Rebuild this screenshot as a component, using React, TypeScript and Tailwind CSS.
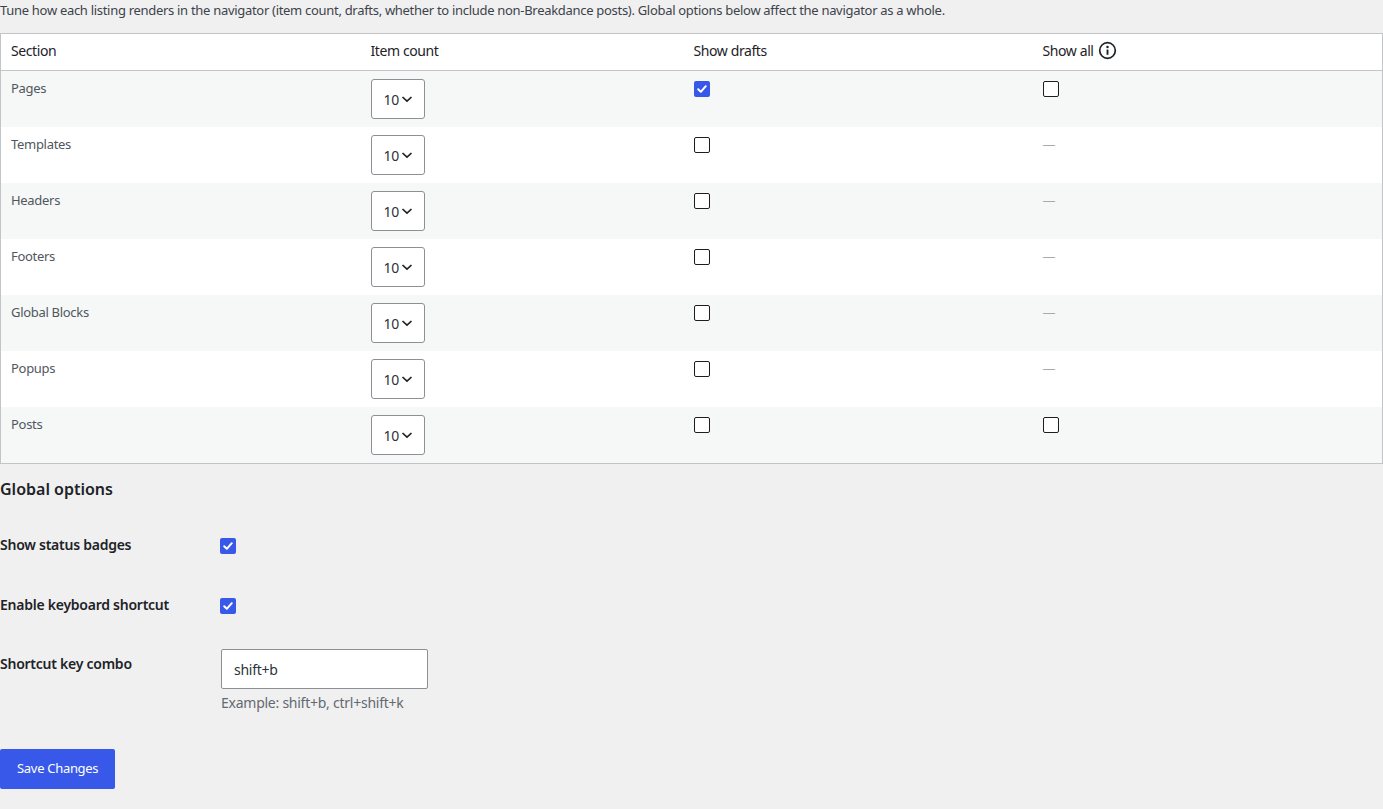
import React, { useState } from 'react';

type Row = { name: string; drafts: boolean; all: boolean | null };

const initialRows: Row[] = [
  { name: 'Pages', drafts: true, all: false },
  { name: 'Templates', drafts: false, all: null },
  { name: 'Headers', drafts: false, all: null },
  { name: 'Footers', drafts: false, all: null },
  { name: 'Global Blocks', drafts: false, all: null },
  { name: 'Popups', drafts: false, all: null },
  { name: 'Posts', drafts: false, all: false },
];

const Checkbox: React.FC<{ checked: boolean; onChange: () => void }> = ({ checked, onChange }) => (
  <button
    type="button"
    onClick={onChange}
    className={
      checked
        ? 'flex w-4 h-4 rounded-[2px] bg-[#3858e9] items-center justify-center'
        : 'block w-4 h-4 rounded-[2px] border border-[#1e1e1e] bg-white'
    }
  >
    {checked && (
      <svg width="12" height="12" viewBox="0 0 12 12">
        <path d="M2.2 6.3 L4.8 8.8 L9.8 3.2" fill="none" stroke="white" strokeWidth="2" strokeLinecap="round" strokeLinejoin="round" />
      </svg>
    )}
  </button>
);

const CountSelect: React.FC = () => (
  <div className="w-[54px] h-10 border border-[#8c8f94] rounded-[3px] bg-white flex items-center pl-[12px] gap-[2px] text-[14px] tracking-[-0.3px] text-[#2c3338]">
    <span>10</span>
    <svg width="12" height="12" viewBox="0 0 12 12">
      <path d="M1.5 4 L6 8.2 L10.5 4" fill="none" stroke="#1e1e1e" strokeWidth="1.6" />
    </svg>
  </div>
);

export default function App() {
  const [rows, setRows] = useState(initialRows);
  const [badges, setBadges] = useState(true);
  const [shortcut, setShortcut] = useState(true);
  const [combo, setCombo] = useState('shift+b');

  const toggle = (i: number, key: 'drafts' | 'all') =>
    setRows(rows.map((r, j) => (j === i ? { ...r, [key]: !r[key] } : r)));

  return (
    <div className="min-h-[809px] bg-[#f0f0f1] text-[#3c434a] font-['Noto_Sans',sans-serif]">
      <p className="text-[13px] leading-[20px] tracking-[-0.3px]">
        Tune how each listing renders in the navigator (item count, drafts, whether to include non-Breakdance posts). Global options below affect the navigator as a whole.
      </p>

      <table className="w-full mt-[13px] border border-[#c3c4c7] bg-white border-collapse">
        <thead>
          <tr className="border-b border-[#c3c4c7] h-[37px] text-left text-[14px] tracking-[-0.4px] text-[#1d2327]">
            <th className="w-[360px] px-[10px] pb-[3px] font-normal">Section</th>
            <th className="w-[323px] px-[10px] pb-[3px] font-normal">Item count</th>
            <th className="w-[349px] px-[10px] pb-[3px] font-normal">Show drafts</th>
            <th className="px-[10px] pb-[3px] font-normal">
              <span className="flex items-center gap-[4px]">
                Show all
                <svg width="19" height="19" viewBox="0 0 20 20">
                  <circle cx="10" cy="10" r="8.2" fill="none" stroke="#1d2327" strokeWidth="1.8" />
                  <circle cx="10" cy="6.2" r="1.3" fill="#1d2327" />
                  <path d="M10 9 V14.5" stroke="#1d2327" strokeWidth="2" />
                </svg>
              </span>
            </th>
          </tr>
        </thead>
        <tbody>
          {rows.map((r, i) => (
            <tr key={r.name} className={i % 2 === 0 ? 'bg-[#f6f7f7] h-[56px]' : 'bg-white h-[56px]'}>
              <td className="px-[10px] pt-[8px] align-top text-[13px] tracking-[-0.3px] text-[#50575e]">{r.name}</td>
              <td className="px-[10px] pt-[8px] pb-[8px] align-top">
                <CountSelect />
              </td>
              <td className="px-[10px] pt-[10px] align-top">
                <Checkbox checked={r.drafts} onChange={() => toggle(i, 'drafts')} />
              </td>
              <td className="px-[10px] pt-[10px] align-top">
                {r.all === null ? (
                  <span className="block text-[13px] leading-[14px] text-[#a7aaad]">—</span>
                ) : (
                  <Checkbox checked={r.all} onChange={() => toggle(i, 'all')} />
                )}
              </td>
            </tr>
          ))}
        </tbody>
      </table>

      <h2 className="mt-[15px] text-[16px] leading-[20px] font-semibold text-[#1d2327]">Global options</h2>

      <div className="mt-[17px] text-[14px] tracking-[-0.25px] text-[#1d2327]">
        <div className="flex h-[60px]">
          <div className="w-[220px] pt-[20px] leading-[18px] font-semibold">Show status badges</div>
          <div className="pt-[22px]">
            <Checkbox checked={badges} onChange={() => setBadges(!badges)} />
          </div>
        </div>
        <div className="flex h-[60px]">
          <div className="w-[220px] pt-[20px] leading-[18px] font-semibold">Enable keyboard shortcut</div>
          <div className="pt-[22px]">
            <Checkbox checked={shortcut} onChange={() => setShortcut(!shortcut)} />
          </div>
        </div>
        <div className="flex">
          <div className="w-[220px] pt-[19px] leading-[18px] font-semibold">Shortcut key combo</div>
          <div className="pt-[13px] pl-[1px]">
            <input
              value={combo}
              onChange={e => setCombo(e.target.value)}
              className="w-[207px] h-10 border border-[#8c8f94] rounded-[2px] bg-white px-[12px] text-[14px] text-[#2c3338] outline-none"
            />
            <p className="mt-[4px] text-[14px] leading-[20px] text-[#646970]">Example: shift+b, ctrl+shift+k</p>
          </div>
        </div>
      </div>

      <button className="mt-[36px] h-10 px-[17px] bg-[#3858e9] text-white text-[13px] tracking-[-0.3px] rounded-[2px]">Save Changes</button>
    </div>
  );
}
